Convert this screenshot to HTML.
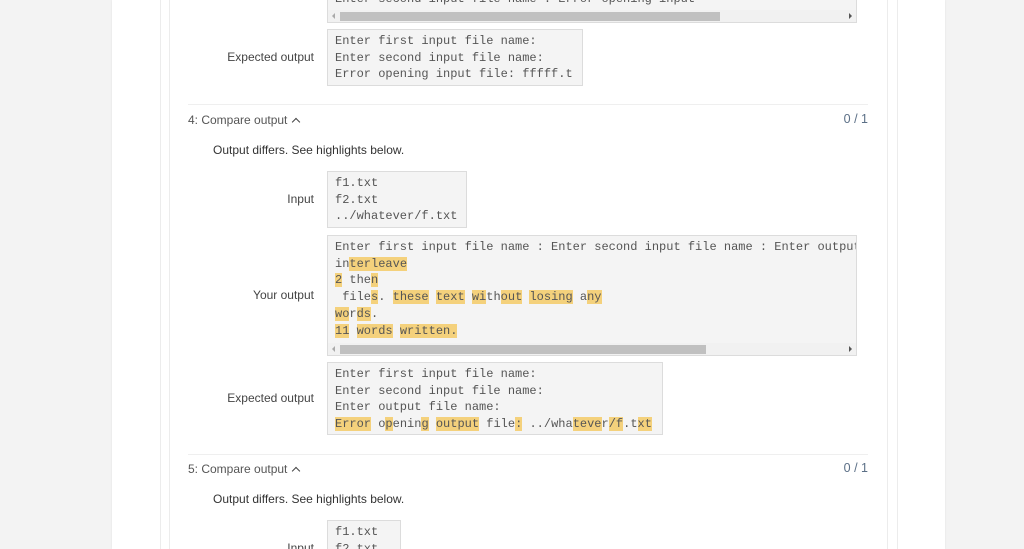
<!DOCTYPE html>
<html style="overflow:hidden;height:549px"><head><meta charset="utf-8"><style>
*{margin:0;padding:0;box-sizing:border-box}
body{width:1024px;height:549px;overflow:hidden;background:#f3f3f3;position:relative;font-family:"Liberation Sans",sans-serif;font-size:12px;color:#333}
.a{position:absolute}
.white{left:112px;top:0;width:833px;height:549px;background:#fff;box-shadow:0 0 2px rgba(0,0,0,.08)}
.vl{position:absolute;top:0;height:549px;width:1px;background:#ececec}
.box{position:absolute;background:#f4f4f4;border:1px solid #dcdcdc;font-family:"Liberation Mono",monospace;font-size:12px;line-height:16.7px;color:#555;padding:3px 7px;white-space:pre;overflow:hidden}
.h{background:#f4d17c}
.lab{position:absolute;text-align:right;width:200px;left:114px;color:#444}
.hr{position:absolute;left:188px;width:680px;height:1px;background:#efefef}
.sb{position:absolute;left:0;right:0;bottom:0;height:12px;background:#f1f1f1}
.th{position:absolute;top:2px;height:9px;left:12px;background:#c0c0c0}
.ar{position:absolute;top:3px;width:0;height:0;border-top:3px solid transparent;border-bottom:3px solid transparent}
.ttl{position:absolute;left:188px;color:#555}
.sc{position:absolute;right:156px;color:#5b6f86;font-size:12.5px}
.chev{display:inline-block;width:6px;height:6px;border-left:1.5px solid #444;border-top:1.5px solid #444;transform:rotate(45deg);margin-left:6px;position:relative;top:1px}
.msg{position:absolute;left:213px;color:#333}
</style></head><body>
<div class="a white"></div>
<div class="vl" style="left:160px"></div><div class="vl" style="left:169px"></div>
<div class="vl" style="left:887px"></div><div class="vl" style="left:897px"></div>

<div class="box" style="left:327px;top:-14px;width:530px;height:37px;padding-top:4px">Enter second input file name : Error opening input<div class="sb"><div class="th" style="width:380px"></div><div class="ar" style="left:4px;border-right:3px solid #aaa"></div><div class="ar" style="right:4px;border-left:3px solid #555"></div></div></div>

<div class="lab" style="top:50px">Expected output</div>
<div class="box" style="left:327px;top:29px;width:256px;height:57px">Enter first input file name:
Enter second input file name:
Error opening input file: fffff.t</div>

<div class="hr" style="top:104px"></div>
<div class="ttl" style="top:113px">4: Compare output<span class="chev"></span></div>
<div class="sc" style="top:112px">0 / 1</div>
<div class="msg" style="top:143px">Output differs. See highlights below.</div>

<div class="lab" style="top:192px">Input</div>
<div class="box" style="left:327px;top:171px;width:140px;height:57px">f1.txt
f2.txt
../whatever/f.txt</div>

<div class="lab" style="top:288px">Your output</div>
<div class="box" style="left:327px;top:235px;width:530px;height:121px">Enter first input file name : Enter second input file name : Enter output file name
in<span class="h">terleave</span>
<span class="h">2</span> the<span class="h">n</span>
 file<span class="h">s</span>. <span class="h">these</span> <span class="h">text</span> <span class="h">wi</span>th<span class="h">out</span> <span class="h">losing</span> a<span class="h">ny</span>
<span class="h">wo</span>r<span class="h">ds</span>.
<span class="h">11</span> <span class="h">words</span> <span class="h">written.</span><div class="sb"><div class="th" style="width:366px"></div><div class="ar" style="left:4px;border-right:3px solid #aaa"></div><div class="ar" style="right:4px;border-left:3px solid #555"></div></div></div>

<div class="lab" style="top:391px">Expected output</div>
<div class="box" style="left:327px;top:362px;width:336px;height:73px">Enter first input file name:
Enter second input file name:
Enter output file name:
<span class="h">Error</span> o<span class="h">p</span>enin<span class="h">g</span> <span class="h">output</span> file<span class="h">:</span> ../wha<span class="h">teve</span>r<span class="h">/f</span>.t<span class="h">xt</span></div>

<div class="hr" style="top:454px"></div>
<div class="ttl" style="top:462px">5: Compare output<span class="chev"></span></div>
<div class="sc" style="top:461px">0 / 1</div>
<div class="msg" style="top:492px">Output differs. See highlights below.</div>

<div class="lab" style="top:541px">Input</div>
<div class="box" style="left:327px;top:520px;width:74px;height:29px;border-bottom:none">f1.txt
f2.txt</div>
</body></html>
